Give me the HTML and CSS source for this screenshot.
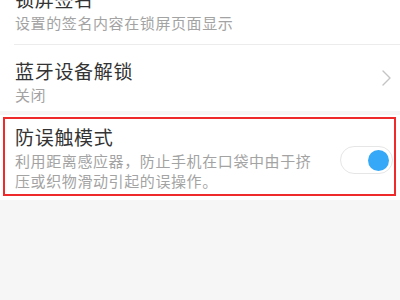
FILE: index.html
```html
<!DOCTYPE html>
<html lang="zh-CN">
<head>
<meta charset="utf-8">
<link rel="stylesheet" href="styles.css">
</head>
<body>
<div class="screen">
  <div class="card list">
    <div class="row first">
      <div class="text">
        <div class="title">锁屏签名</div>
        <div class="sub">设置的签名内容在锁屏页面显示</div>
      </div>
    </div>
    <div class="row second">
      <div class="text">
        <div class="title">蓝牙设备解锁</div>
        <div class="sub">关闭</div>
      </div>
      <svg class="chev" width="12" height="18" viewBox="0 0 12 18"><path d="M3 2 L10 9 L3 16" fill="none" stroke="#c4c4c4" stroke-width="1.4" stroke-linecap="round" stroke-linejoin="round"/></svg>
    </div>
  </div>
  <div class="card card2">
    <div class="row highlight">
      <div class="text wide">
        <div class="title">防误触模式</div>
        <div class="sub">利用距离感应器，防止手机在口袋中由于挤压或织物滑动引起的误操作。</div>
      </div>
      <div class="toggle"><div class="knob"></div></div>
    </div>
  </div>
</div>
</body>
</html>
```
FILE: styles.css
```css
html, body {
  margin: 0;
  padding: 0;
  background: #f6f6f6;
  font-family: "Noto Sans CJK SC", "Noto Sans", sans-serif;
}
.screen {
  width: 400px;
  height: 300px;
  overflow: hidden;
}
.card {
  background: #ffffff;
}
.list {
  margin-top: -27px;
}
.row {
  display: flex;
  align-items: center;
}
.first {
  padding: 14px 15px 11px 15px;
  border-bottom: 1px solid #ececec;
  margin-left: 14px;
  padding-left: 1px;
}
.second {
  padding: 14px 8px 6px 15px;
}
.text {
  flex: 1;
}
.title {
  font-size: 19px;
  line-height: 24px;
  letter-spacing: 0.7px;
  color: #333333;
}
.sub {
  font-size: 15px;
  line-height: 20px;
  letter-spacing: 0.6px;
  color: #a3a3a3;
  margin-top: 2px;
}
.chev {
  display: block;
  margin-top: -8px;
}
.card2 {
  margin-top: 4px;
  padding: 2px 4px 4px 3px;
}
.highlight {
  border: 2px solid #ee2a2a;
  padding: 6px 0 3px 10px;
}
.text.wide {
  flex: none;
  width: 302px;
}
.toggle {
  margin-left: 23px;
  width: 48px;
  height: 26px;
  border: 1px solid #e6e6e6;
  border-radius: 15px;
  background: #ffffff;
  display: flex;
  align-items: center;
  justify-content: flex-end;
  padding-right: 3px;
  box-sizing: content-box;
  margin-top: 4px;
}
.knob {
  width: 21px;
  height: 21px;
  border-radius: 50%;
  background: #35a9f7;
}
```
